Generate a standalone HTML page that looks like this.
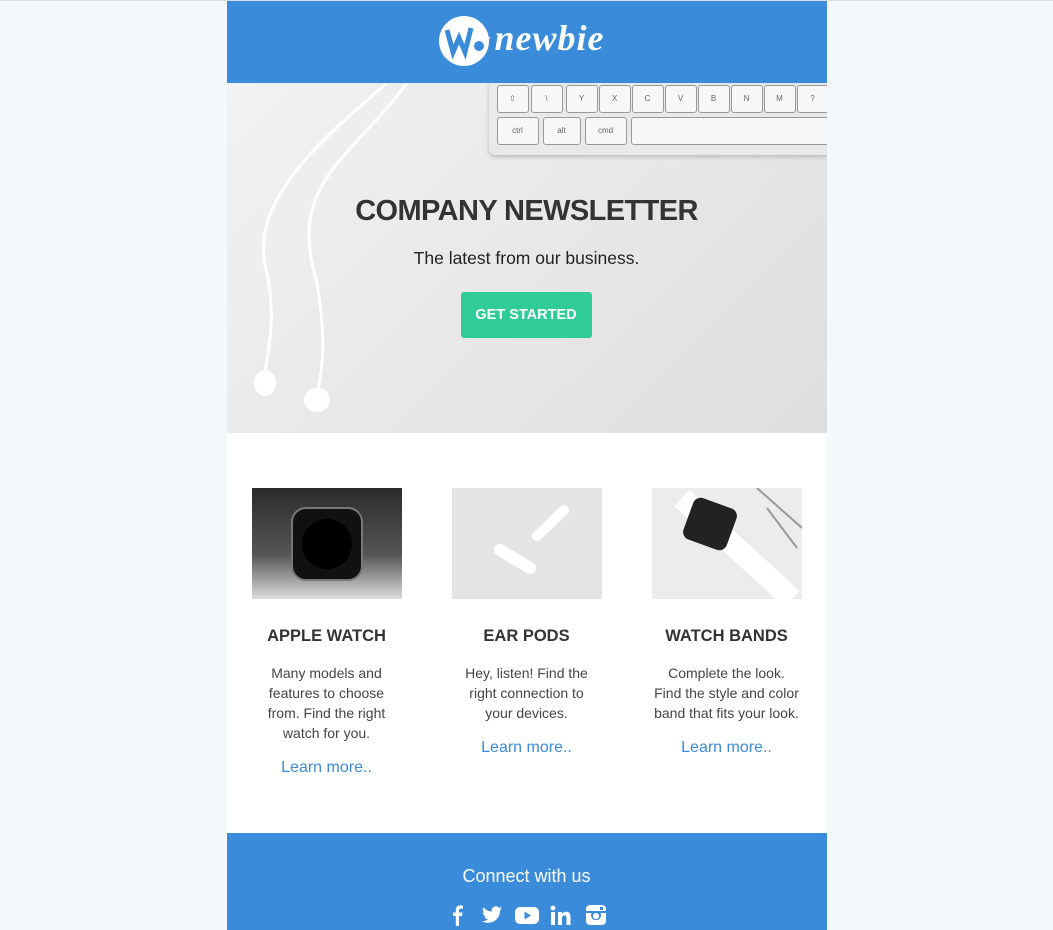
<!DOCTYPE html>
<html><head><style>
body{margin:0;background:#f5f8fb;font-family:"Liberation Sans",sans-serif;border-top:1px solid #d8dde2}
.w{width:600px;margin:0 auto;}
.hd{height:82px;background:#3a8bd9;position:relative}
.hero{height:350px;background:linear-gradient(135deg,#f2f2f2,#e6e6e6 60%,#dedede);position:relative;text-align:center;overflow:hidden}
.hero h1{margin:0;position:absolute;top:112px;left:0;right:0;font-size:29px;font-weight:bold;color:#333;letter-spacing:-0.6px}
.hero p{position:absolute;top:165px;left:0;right:0;margin:0;font-size:17.5px;color:#222}
.btn{position:absolute;left:234px;top:209px;width:131px;height:46px;background:#2fcc98;border-radius:3px;color:#fff;font-weight:bold;font-size:14.5px;line-height:47px}
.kb{position:absolute;left:262px;top:0;width:340px;height:72px;background:#e9e9e9;border-radius:0 0 4px 6px;box-shadow:0 2px 4px #bbb}
.k{position:absolute;width:30px;height:26px;background:#f7f7f7;border:1px solid #999;border-radius:3px;font-size:8px;color:#666;line-height:26px}
.ct{background:#fff;height:400px;position:relative}
.col{position:absolute;top:55px;width:180px;text-align:center;color:#333}
.im{width:150px;height:111px;margin:0 auto}
.col h3{margin:28px 0 17px;font-size:16.5px;color:#333}
.col p{margin:0;font-size:14px;line-height:20px;color:#444}
.col a{display:block;margin-top:16px;color:#3a8bd9;font-size:16px}
.ft{background:#3a8bd9;height:97px;text-align:center;color:#fff;position:relative}
.ft svg{position:absolute;top:71px}
</style></head><body><div class="w">
<div class="hd">
<svg width="54" height="54" style="position:absolute;left:212px;top:15px" viewBox="0 0 54 54"><circle cx="25" cy="25" r="25" fill="#fff"/><path d="M8 14 L14 36 L20 22 L26 36 L32 12" stroke="#3a8bd9" stroke-width="5" fill="none"/><circle cx="40" cy="30" r="5" fill="#3a8bd9"/><path d="M44 18 L52 22 L44 24z" fill="#fff"/></svg>
<div style="position:absolute;left:268px;top:16px;color:#fff;font:italic bold 36px 'Liberation Serif',serif;letter-spacing:1px">newbie</div>
</div>
<div class="hero">
<div class="kb">
<div class="k" style="left:8px;top:2px">⇧</div><div class="k" style="left:42px;top:2px">\</div><div class="k" style="left:77px;top:2px">Y</div><div class="k" style="left:110px;top:2px">X</div><div class="k" style="left:143px;top:2px">C</div><div class="k" style="left:176px;top:2px">V</div><div class="k" style="left:209px;top:2px">B</div><div class="k" style="left:242px;top:2px">N</div><div class="k" style="left:275px;top:2px">M</div><div class="k" style="left:308px;top:2px">?</div>
<div class="k" style="left:8px;top:34px;width:40px">ctrl</div><div class="k" style="left:54px;top:34px;width:36px">alt</div><div class="k" style="left:96px;top:34px;width:40px">cmd</div><div class="k" style="left:142px;top:34px;width:196px"></div>
</div>
<svg style="position:absolute;left:0;top:0" width="200" height="340"><path d="M180 0 C120 80 60 100 90 200 C100 260 95 290 90 310 M160 0 C90 60 20 120 40 190 C50 240 40 270 38 290" stroke="#fff" stroke-width="3" fill="none"/><ellipse cx="38" cy="300" rx="11" ry="13" fill="#fff"/><ellipse cx="90" cy="317" rx="13" ry="12" fill="#fff"/></svg>
<h1>COMPANY NEWSLETTER</h1>
<p>The latest from our business.</p>
<div class="btn">GET STARTED</div>
</div>
<div class="ct">
<div class="col" style="left:10px"><div class="im" style="background:linear-gradient(#2b2b2b,#555 60%,#ddd)"><svg width="150" height="111"><rect x="40" y="20" width="70" height="72" rx="14" fill="#111" stroke="#777" stroke-width="2"/><circle cx="75" cy="56" r="25" fill="#000"/></svg></div><h3>APPLE WATCH</h3><p>Many models and<br>features to choose<br>from. Find the right<br>watch for you.</p><a>Learn more..</a></div>
<div class="col" style="left:210px"><div class="im" style="background:#e4e4e4"><svg width="150" height="111"><path d="M48 62 L78 80" stroke="#fff" stroke-width="12" stroke-linecap="round"/><path d="M85 48 L112 22" stroke="#fff" stroke-width="10" stroke-linecap="round"/></svg></div><h3>EAR PODS</h3><p>Hey, listen! Find the<br>right connection to<br>your devices.</p><a>Learn more..</a></div>
<div class="col" style="left:410px"><div class="im" style="background:#ececec"><svg width="150" height="111"><path d="M30 10 L140 111" stroke="#fff" stroke-width="22"/><rect x="35" y="14" width="46" height="44" rx="8" fill="#222" transform="rotate(20 58 36)"/><path d="M105 0 L150 40 M115 20 L145 60" stroke="#999" stroke-width="2"/></svg></div><h3>WATCH BANDS</h3><p>Complete the look.<br>Find the style and color<br>band that fits your look.</p><a>Learn more..</a></div>
</div>
<div class="ft"><div style="padding-top:33px;font-size:18px">Connect with us</div>
<svg style="left:221px" width="20" height="22" viewBox="0 0 20 22"><path d="M11 22V12h3l.5-3.5H11V6.5c0-1 .3-1.7 1.8-1.7H15V1.6C14.5 1.5 13.4 1.4 12.2 1.4 9.6 1.4 7.8 3 7.8 5.9v2.6H5V12h2.8v10z" fill="#fff"/></svg>
<svg style="left:254px" width="22" height="22" viewBox="0 0 24 24"><path d="M23 5a9 9 0 0 1-2.6.7A4.5 4.5 0 0 0 22.4 3a9 9 0 0 1-2.9 1.1 4.5 4.5 0 0 0-7.7 4.1A12.8 12.8 0 0 1 2.5 3.5a4.5 4.5 0 0 0 1.4 6 4.5 4.5 0 0 1-2-.6 4.5 4.5 0 0 0 3.6 4.5 4.5 4.5 0 0 1-2 .1 4.5 4.5 0 0 0 4.2 3.1A9 9 0 0 1 1 18.5 12.8 12.8 0 0 0 7.900 20.5c8.3 0 12.8-6.9 12.8-12.8v-.6A9 9 0 0 0 23 5z" fill="#fff"/></svg>
<svg style="left:288px" width="24" height="22" viewBox="0 0 24 22"><rect x="0" y="3" width="24" height="17" rx="5" fill="#fff"/><path d="M9.5 7.5v8l6.5-4z" fill="#3a8bd9"/></svg>
<svg style="left:323px" width="21" height="22" viewBox="0 0 21 22"><rect x="1" y="8" width="4" height="13" fill="#fff"/><circle cx="3" cy="4" r="2.4" fill="#fff"/><path d="M8 8h4v2c1-1.5 2.5-2.3 4.3-2.3 3 0 4.2 2 4.2 5V21h-4v-7c0-1.6-.5-2.6-1.9-2.6S12 12.5 12 14v7H8z" fill="#fff"/></svg>
<svg style="left:358px" width="22" height="22" viewBox="0 0 22 22"><path d="M5 1h12a4 4 0 0 1 4 4v12a4 4 0 0 1-4 4H5a4 4 0 0 1-4-4V5a4 4 0 0 1 4-4zM1 9h5.5a5 5 0 1 0 9 0H21V7H1z" fill="#fff" fill-rule="evenodd"/><circle cx="11" cy="12" r="3" fill="#fff"/><rect x="15" y="3" width="3" height="3" fill="#3a8bd9"/></svg>
</div>
</div></body></html>
